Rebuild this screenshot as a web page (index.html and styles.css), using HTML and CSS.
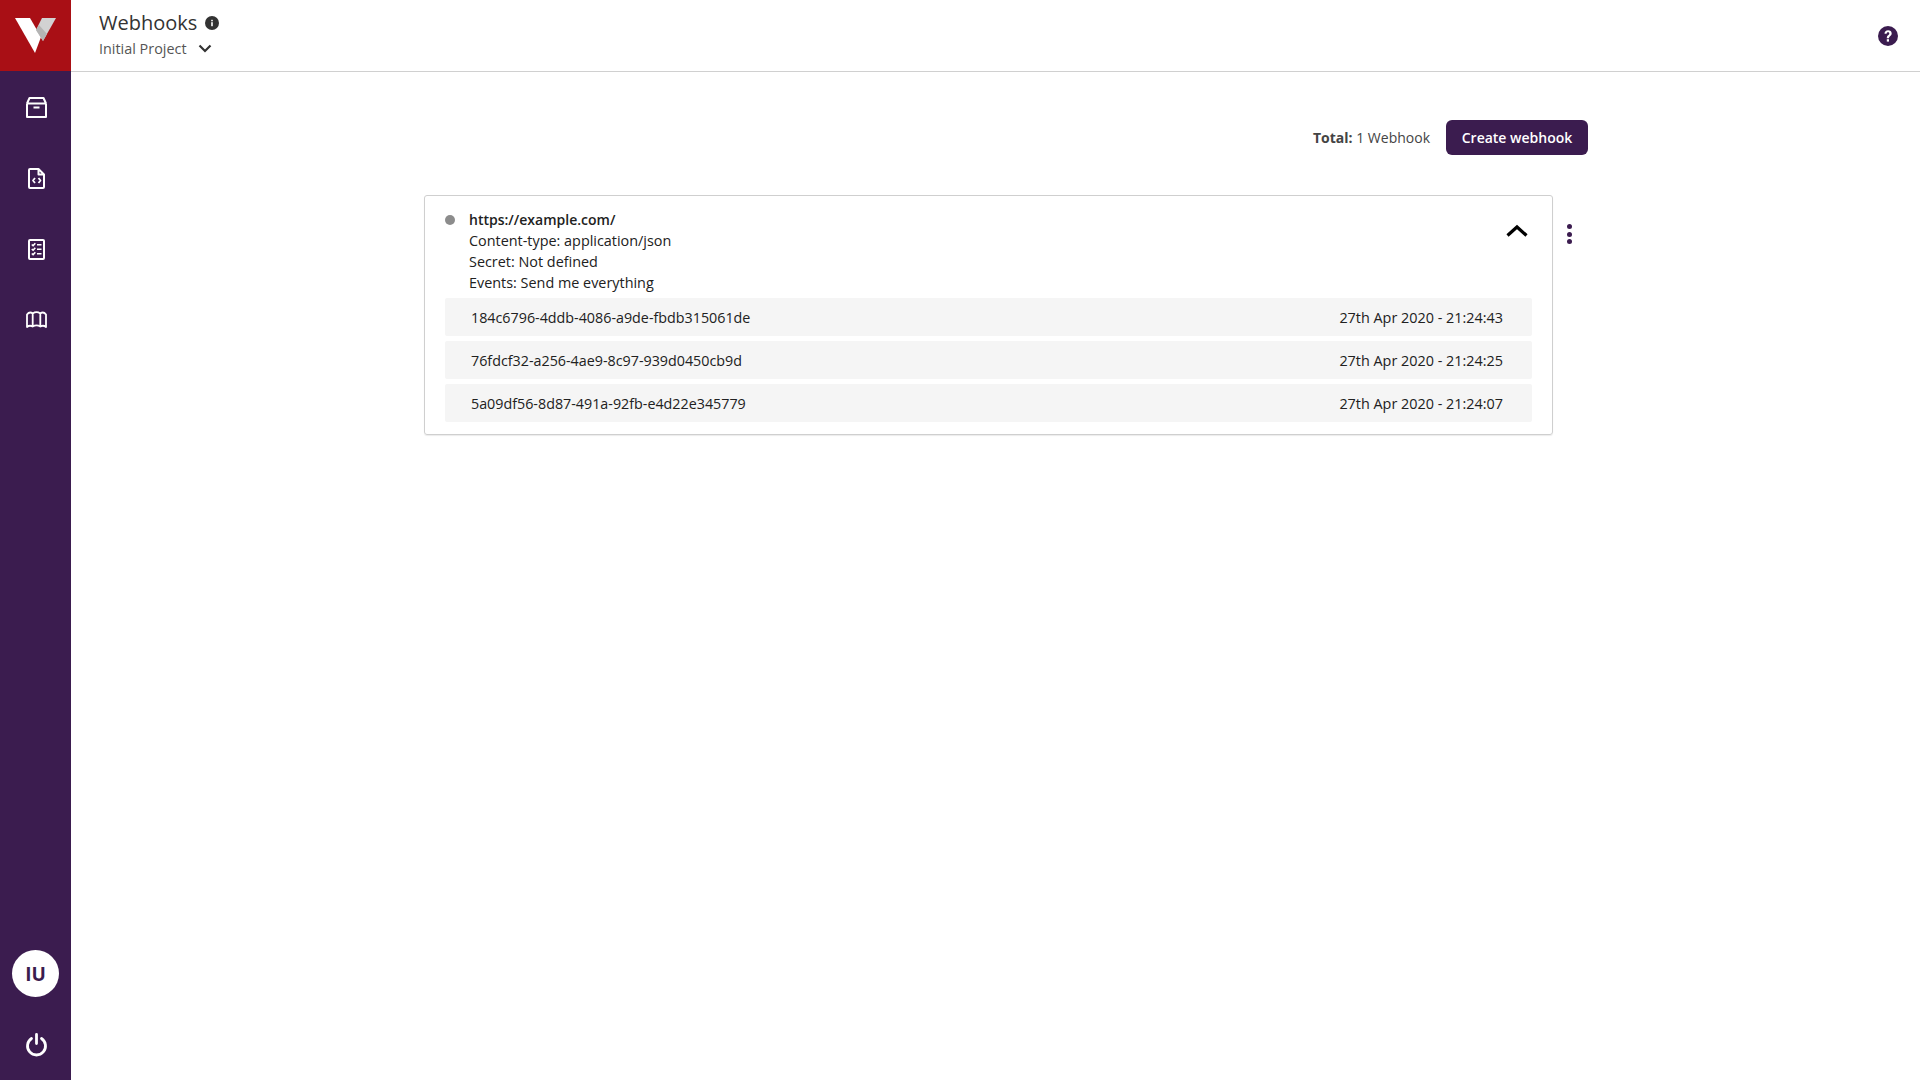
FILE: index.html
```html
<!DOCTYPE html>
<html lang="en">
<head>
<meta charset="utf-8">
<title>Webhooks</title>
<link rel="stylesheet" href="styles.css">
</head>
<body>
<aside class="sidebar">
  <div class="logo">
    <svg width="41" height="35" viewBox="0 0 41 35">
      <polygon points="0,0 15,0 26,19 20,35" fill="#fff"/>
      <polygon points="27,0 41,0 28,23 21,12" fill="#d2d2d2"/>
      <polygon points="21,12 24,7 32,16 28,23" fill="#b4b4b4"/>
    </svg>
  </div>
  <nav class="nav">
    <a class="nav-item"><svg width="24" height="24" viewBox="0 0 24 24" fill="none" stroke="#fff" stroke-width="2" stroke-linejoin="round"><path d="M2 8.500V22h19V8.500M2 8.500L4.500 3h14L21 8.500M2 8.500h19M8.500 12.500h6"/></svg></a>
    <a class="nav-item"><svg width="24" height="24" viewBox="0 0 24 24" fill="none" stroke="#fff" stroke-width="2" stroke-linejoin="round"><path d="M4 4a1 1 0 0 1 1-1h8.500L19 8.500V21a1 1 0 0 1-1 1H5a1 1 0 0 1-1-1zM13.500 3v5.500H19"/><path d="M10 12l-2 2.500 2 2.500M13.500 12l2 2.500-2 2.500" stroke-width="1.800"/></svg></a>
    <a class="nav-item"><svg width="24" height="24" viewBox="0 0 24 24" fill="none" stroke="#fff" stroke-width="2" stroke-linejoin="round"><rect x="4" y="3" width="15" height="19" rx="1"/><path stroke-width="1.600" d="M6.800 7.500l1.300 1.300 2.200-2.500M6.800 12l1.300 1.300 2.200-2.500M6.800 16.500l1.300 1.300 2.200-2.500M12 7.800h4.500M12 12.300h4.500M12 16.800h4.500"/></svg></a>
    <a class="nav-item"><svg width="24" height="24" viewBox="0 0 24 24" fill="none" stroke="#fff" stroke-width="1.800" stroke-linejoin="round"><path d="M2 6.500C3.800 4.200 5.900 4.200 7.700 5.500c2.500-1.700 5.100-1.700 7.600 0 1.800-1.300 3.900-1.300 5.700 1V19c-1.800-1.500-3.900-1.500-5.700-.4-2.500-1.500-5.100-1.500-7.600 0C5.900 17.500 3.800 17.500 2 19zM7.700 5.500v13.100M15.300 5.500v13.100"/></svg></a>
  </nav>
  <div class="side-foot">
    <div class="avatar">IU</div>
    <a class="nav-item"><svg width="24" height="24" viewBox="0 0 24 24" fill="none" stroke="#fff" stroke-width="2.800" stroke-linecap="round"><path d="M6.500 5.500a9 9 0 1 0 10 0M11.500 1.500v9"/></svg></a>
  </div>
</aside>
<div class="page">
  <header class="topbar">
    <div class="heading">
      <div class="title-row">
        <h1 class="title">Webhooks</h1>
        <svg class="info" width="14" height="14" viewBox="0 0 14 14"><circle cx="7" cy="7" r="7" fill="#333"/><rect x="6.200" y="6.200" width="1.600" height="4" fill="#fff"/><rect x="6.200" y="3.800" width="1.600" height="1.500" fill="#fff"/></svg>
      </div>
      <div class="project-row">
        <span class="project">Initial Project</span>
        <svg width="14" height="9" viewBox="0 0 14 9" fill="none" stroke="#333" stroke-width="2.200"><path d="M1.500 1.500L7 7l5.500-5.500"/></svg>
      </div>
    </div>
    <svg class="help" width="20" height="20" viewBox="0 0 20 20"><circle cx="10" cy="10" r="10" fill="#3b1c4f"/><path d="M6.500 7.800C6.500 5.700 8 4.300 10.100 4.300c2.100 0 3.600 1.200 3.600 3.100 0 2.600-2.700 2.600-2.700 4.800H8.800c0-3.200 2.500-3 2.500-4.700 0-.8-.5-1.300-1.300-1.300-.9 0-1.400.6-1.400 1.600z" fill="#fff"/><rect x="8.800" y="13.200" width="2.200" height="2.400" fill="#fff"/></svg>
  </header>
  <main class="content">
    <div class="toolbar">
      <p class="total"><strong>Total:</strong> 1 Webhook</p>
      <button class="btn">Create webhook</button>
    </div>
    <div class="hook-row">
      <section class="card">
        <div class="card-head">
          <span class="dot"></span>
          <div class="meta">
            <div class="url">https://example.com/</div>
            <div>Content-type: application/json</div>
            <div>Secret: Not defined</div>
            <div>Events: Send me everything</div>
          </div>
          <svg class="chev" width="22" height="13" viewBox="0 0 22 13" fill="none" stroke="#000" stroke-width="3.200"><path d="M1.500 11.500L11 3l9.500 8.500"/></svg>
        </div>
        <div class="rows">
          <div class="row"><span class="guid">184c6796-4ddb-4086-a9de-fbdb315061de</span><span>27th Apr 2020 - 21:24:43</span></div>
          <div class="row"><span class="guid">76fdcf32-a256-4ae9-8c97-939d0450cb9d</span><span>27th Apr 2020 - 21:24:25</span></div>
          <div class="row"><span class="guid">5a09df56-8d87-491a-92fb-e4d22e345779</span><span>27th Apr 2020 - 21:24:07</span></div>
        </div>
      </section>
      <div class="kebab"><i></i><i></i><i></i></div>
    </div>
  </main>
</div>
</body>
</html>
```
FILE: styles.css
```css
* { box-sizing: border-box; }
html, body { height: 100%; }
body {
  margin: 0;
  display: flex;
  height: 1080px;
  overflow: hidden;
  background: #fff;
  color: #212121;
  font-family: "Open Sans", sans-serif;
  font-size: 14px;
}
.sidebar {
  width: 71px;
  flex: none;
  background: #3b1c4f;
  display: flex;
  flex-direction: column;
}
.logo {
  height: 71px;
  background: #a90f15;
  display: flex;
  align-items: center;
  justify-content: center;
}
.nav { flex: 1; display: flex; flex-direction: column; }
.nav-item {
  height: 71px;
  display: flex;
  align-items: center;
  justify-content: center;
  padding: 1px 0 0 3px;
}
.side-foot { display: flex; flex-direction: column; align-items: center; }
.side-foot .nav-item { width: 100%; }
.avatar {
  width: 47px;
  height: 47px;
  margin-bottom: 12px;
  border-radius: 50%;
  background: #fff;
  color: #3b1c4f;
  font-size: 19px;
  font-weight: 700;
  display: flex;
  align-items: center;
  justify-content: center;
}
.page { flex: 1; display: flex; flex-direction: column; min-width: 0; }
.topbar {
  height: 72px;
  flex: none;
  border-bottom: 1px solid #d0d0d0;
  display: flex;
  align-items: center;
  justify-content: space-between;
  padding: 0 22px 0 28px;
}
.heading { display: flex; flex-direction: column; margin-bottom: 2px; }
.title-row { display: flex; align-items: center; gap: 8px; height: 27px; }
.title { margin: 0; font-size: 20px; font-weight: 400; color: #333; line-height: 27px; }
.info { margin-top: 2px; }
.project-row { display: flex; align-items: center; gap: 11px; height: 24px; margin-top: 1px; }
.project { color: #555; font-size: 14.4px; }
.content { padding: 48px 332px 0 353px; }
.toolbar {
  display: flex;
  justify-content: flex-end;
  align-items: center;
  gap: 16px;
  height: 35px;
}
.total { margin: 0; color: #444; }
.btn {
  width: 142px;
  height: 35px;
  border: 0;
  border-radius: 6px;
  background: #3b1c4f;
  color: #fff;
  font: 600 14px "Open Sans", sans-serif;
}
.hook-row { display: flex; align-items: flex-start; margin-top: 40px; }
.card {
  width: 1129px;
  height: 240px;
  border: 1px solid #cfcfcf;
  border-radius: 3px;
  box-shadow: 0 1px 1px rgba(0,0,0,.08);
  padding: 13px 20px 0;
  display: flex;
  flex-direction: column;
  font-size: 14.4px;
}
.card-head { display: flex; align-items: flex-start; height: 84px; line-height: 21px; }
.dot {
  width: 10px;
  height: 10px;
  border-radius: 50%;
  background: #8c8c8c;
  margin: 6px 14px 0 0;
  flex: none;
}
.meta { flex: 1; }
.url { font-weight: 600; font-size: 14px; }
.chev { margin: 15px 4px 0 0; }
.rows { display: flex; flex-direction: column; gap: 5px; margin-top: 5px; }
.row {
  height: 38px;
  background: #f5f5f5;
  border-radius: 2px;
  display: flex;
  align-items: center;
  justify-content: space-between;
  padding: 0 29px 0 26px;
}
.guid { font-size: 14.3px; }
.kebab {
  width: 33px;
  display: flex;
  flex-direction: column;
  align-items: center;
  gap: 2.500px;
  margin-top: 29px;
}
.kebab i { width: 5px; height: 5px; border-radius: 50%; background: #3b1c4f; }
```
